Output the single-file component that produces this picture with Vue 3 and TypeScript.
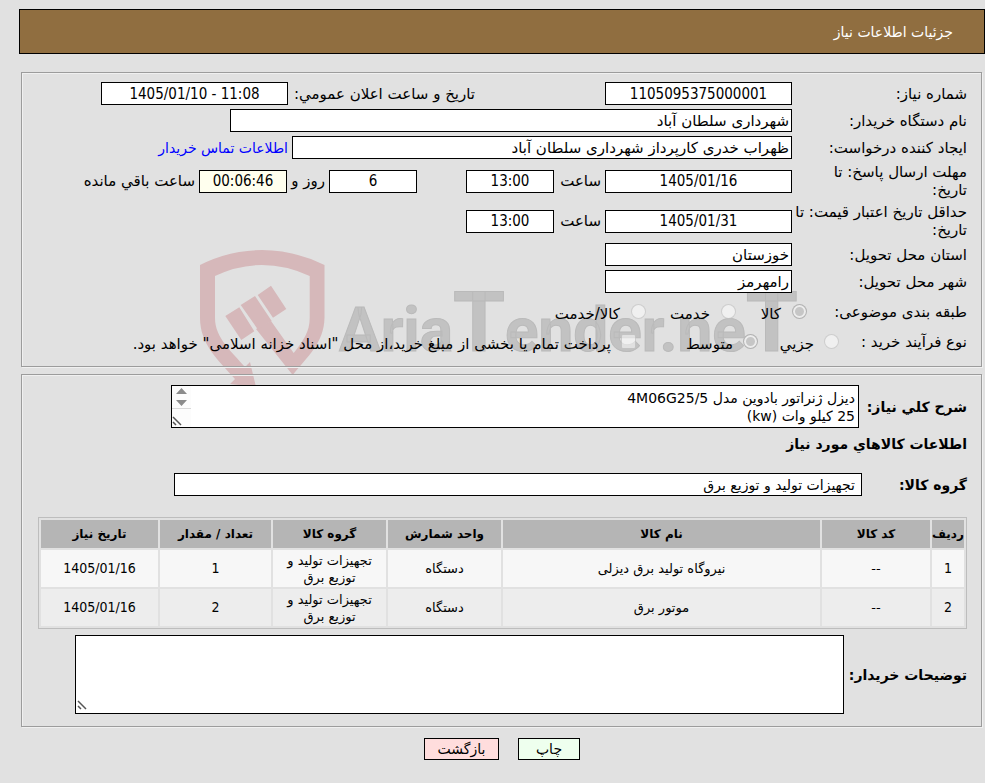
<script setup lang="ts">
import { ref } from 'vue'

interface Item {
  code: string
  name: string
  unit: string
  group: string
  qty: number
  date: string
}

const items: Item[] = [
  { code: '--', name: 'نیروگاه تولید برق دیزلی', unit: 'دستگاه', group: 'تجهیزات تولید و توزیع برق', qty: 1, date: '1405/01/16' },
  { code: '--', name: 'موتور برق', unit: 'دستگاه', group: 'تجهیزات تولید و توزیع برق', qty: 2, date: '1405/01/16' },
]

const description = ref('دیزل ژنراتور بادوین مدل 4M06G25/5\n25 کیلو وات (kw)')
const buyerNotes = ref('')
</script>

<template>
  <div class="page" dir="rtl">
    <header class="title-bar">جزئیات اطلاعات نیاز</header>

    <main class="content">
      <svg class="watermark" viewBox="190 245 615 147" aria-hidden="true" direction="ltr">
        <g fill="#d6b8ba">
          <path
            d="M200 265Q230 250 262 250T324.500 265V318C324 343 307 357 292.700 375L256 329L271 321L293.700 353C303 341 309.700 332 309.700 318V276Q286 265 262 265T215 276V318C215 338 232 352 245 367L250 362L256 387L230 384L235 379C218 360 200 344 200 318Z"
          />
          <path d="M225.300 316L239.300 307.300L254.300 331.300L241.300 340ZM240.700 305L255 296L271.700 321L257.700 329.300ZM257.700 295L271 285.700L286.300 309L273 317.700Z" />
        </g>
        <text class="brand" x="339" y="351">Aria<tspan class="cap">T</tspan>ender.ne<tspan class="cap">T</tspan></text>
      </svg>

      <section class="panel general">
        <div class="row">
          <label class="caption" for="need-no">شماره نیاز:</label>
          <input id="need-no" class="box date" value="1105095375000001" readonly />
          <label class="announce" for="announce">تاریخ و ساعت اعلان عمومي:</label>
          <input id="announce" class="box date" value="1405/01/10 - 11:08" readonly />
        </div>
        <div class="row">
          <label class="caption" for="org">نام دستگاه خریدار:</label>
          <input id="org" class="box org" value="شهرداری سلطان آباد" readonly />
        </div>
        <div class="row">
          <label class="caption" for="creator">ایجاد کننده درخواست:</label>
          <input id="creator" class="box creator" value="ظهراب خدری کارپرداز شهرداری سلطان آباد" readonly />
          <a href="#">اطلاعات تماس خریدار</a>
        </div>
        <div class="row tall">
          <label class="caption" for="deadline">مهلت ارسال پاسخ: تا<br />تاریخ:</label>
          <input id="deadline" class="box date" value="1405/01/16" readonly />
          <label class="hour" for="deadline-h">ساعت</label>
          <input id="deadline-h" class="box time" value="13:00" readonly />
          <input id="days" class="box time days" value="6" readonly />
          <label class="and" for="days">روز و</label>
          <input id="left" class="box time countdown" value="00:06:46" readonly />
          <label for="left">ساعت باقي مانده</label>
        </div>
        <div class="row tall">
          <label class="caption" for="valid">حداقل تاریخ اعتبار قیمت: تا<br />تاریخ:</label>
          <input id="valid" class="box date" value="1405/01/31" readonly />
          <label class="hour" for="valid-h">ساعت</label>
          <input id="valid-h" class="box time" value="13:00" readonly />
        </div>
        <div class="row">
          <label class="caption" for="province">استان محل تحویل:</label>
          <input id="province" class="box place" value="خوزستان" readonly />
        </div>
        <div class="row">
          <label class="caption" for="city">شهر محل تحویل:</label>
          <input id="city" class="box place" value="رامهرمز" readonly />
        </div>
        <div class="row options subject">
          <span class="caption">طبقه بندی موضوعی:</span>
          <label class="first"><input type="radio" name="subject" checked disabled /><span>کالا</span></label>
          <label><input type="radio" name="subject" disabled /><span>خدمت</span></label>
          <label><input type="radio" name="subject" disabled /><span>کالا/خدمت</span></label>
        </div>
        <div class="row options process">
          <span class="caption">نوع فرآیند خرید :</span>
          <label><input type="radio" name="process" disabled /><span>جزیي</span></label>
          <label><input type="radio" name="process" checked disabled /><span>متوسط</span></label>
          <label><input type="checkbox" disabled /><span>پرداخت تمام یا بخشی از مبلغ خرید،از محل "اسناد خزانه اسلامی" خواهد بود.</span></label>
        </div>
      </section>

      <section class="panel goods">
        <div class="row">
          <label class="strong" for="desc">شرح کلي نیاز:</label>
          <div class="area desc">
            <textarea id="desc" v-model="description" readonly></textarea>
            <svg class="scroll" width="19" height="41" viewBox="0 0 19 41" aria-hidden="true">
              <path d="M0 0H19V41H0Z" fill="#fcfcfc" />
              <path d="M4 8L9.500 2L15 8ZM4 14H15L9.500 20Z" fill="#8b8b8b" />
              <path d="M0 22.500H19" stroke="#d9d9d9" />
              <path d="M1 31L9 39M1 36L4 39" stroke="#555" stroke-width="1.500" />
            </svg>
          </div>
        </div>
        <h2>اطلاعات کالاهاي مورد نیاز</h2>
        <div class="row group">
          <label class="strong" for="group">گروه کالا:</label>
          <input id="group" class="box wide" value="تجهیزات تولید و توزیع برق" readonly />
        </div>

        <table>
          <colgroup>
            <col class="c-row" /><col class="c-code" /><col /><col class="c-unit" /><col class="c-unit" /><col class="c-qty" /><col class="c-date" />
          </colgroup>
          <thead>
            <tr>
              <th>ردیف</th><th>کد کالا</th><th>نام کالا</th><th>واحد شمارش</th><th>گروه کالا</th><th>تعداد / مقدار</th><th>تاریخ نیاز</th>
            </tr>
          </thead>
          <tbody>
            <tr v-for="(item, i) in items" :key="i">
              <td class="num">{{ i + 1 }}</td>
              <td>{{ item.code }}</td>
              <td>{{ item.name }}</td>
              <td>{{ item.unit }}</td>
              <td>{{ item.group }}</td>
              <td class="num">{{ item.qty }}</td>
              <td class="num">{{ item.date }}</td>
            </tr>
          </tbody>
        </table>

        <div class="row notes-row">
          <label class="strong" for="notes">توضیحات خریدار:</label>
          <div class="area notes">
            <textarea id="notes" v-model="buyerNotes" readonly></textarea>
            <svg class="grip" width="12" height="12" viewBox="0 0 12 12" aria-hidden="true">
              <path d="M1 1L9 9M1 6L4 9" stroke="#555" stroke-width="1.500" />
            </svg>
          </div>
        </div>
      </section>
    </main>

    <footer class="actions">
      <button type="button" class="print">چاپ</button>
      <button type="button" class="back">بازگشت</button>
    </footer>
  </div>
</template>

<style>
body {
  background: #e1e1e1;
}
</style>

<style scoped>
.page {
  padding: 9px 0 22px 19px;
  font: 14px/18px 'DejaVu Sans', sans-serif;
  color: #000;
}
.title-bar {
  padding: 13px 31px 12px;
  border: 1px solid #000;
  background: #906e40;
  color: #fff;
}
.content {
  position: relative;
  z-index: 0;
  margin: 18px 3px 0 2px;
}
.watermark {
  position: absolute;
  z-index: -1;
  top: 173px;
  right: 177px;
  width: 615px;
  height: 147px;
}
.brand {
  fill: #c2c2c2;
  stroke: #bababa;
  font: bold 62px Roboto, 'Liberation Sans', sans-serif;
}
.cap {
  font-size: 84px;
}
.panel {
  margin-bottom: 7px;
  padding: 9px 14px 9px 16px;
  border: 1px solid #9c9c9c;
  box-shadow: inset 1px 1px #f0f0f0, 1px 1px #f0f0f0;
}
.general {
  font-size: 15px;
}
.row {
  display: flex;
  align-items: center;
  min-height: 23px;
  margin-bottom: 4px;
  white-space: nowrap;
}
.row.tall {
  min-height: 36px;
}
.caption {
  flex: none;
  width: 175px;
}
.box {
  box-sizing: border-box;
  height: 23px;
  margin: 0;
  padding: 0 2px;
  border: 1px solid #000;
  border-radius: 0;
  background: #fff;
  color: #000;
  font: inherit;
}
.date,
.time {
  direction: ltr;
  text-align: center;
  font: 15px/18px 'DejaVu Sans Condensed', 'DejaVu Sans', sans-serif;
}
.date {
  width: 187px;
}
.time {
  width: 88px;
}
.place {
  width: 187px;
}
.org {
  width: 562px;
}
.creator {
  width: 500px;
}
.box + label {
  margin-right: 4px;
}
.box + .announce {
  width: 187px;
  margin-right: 130px;
}
.hour {
  width: 47px;
}
.days {
  margin-right: 49px;
}
.and {
  width: 38px;
}
.countdown {
  background: #ffffee;
}
a {
  margin-right: 4px;
  color: #0000ff;
  font-size: 14px;
  text-decoration: none;
}
.options label {
  display: flex;
  align-items: center;
}
.options label span {
  padding-top: 4px;
}
.options {
  margin-top: 7px;
}
.subject {
  margin-bottom: 0;
}
.subject .caption {
  width: 160px;
}
.subject label {
  width: 90px;
  gap: 11px;
}
.subject .first {
  width: 71px;
}
.process .caption {
  width: 128px;
}
.process label {
  width: 81px;
  gap: 10px;
}
.process label:last-child {
  margin-right: 41px;
}
input[type='radio'],
input[type='checkbox'] {
  appearance: none;
  flex: none;
  box-sizing: border-box;
  width: 15px;
  height: 15px;
  margin: 0;
  border: 1px solid rgba(140, 140, 140, 0.35);
  background: rgba(255, 255, 255, 0.5);
}
input[type='radio'] {
  border-radius: 50%;
}
input[type='checkbox'] {
  border-radius: 2px;
}
input[type='radio']:checked {
  background: #c6c6c6;
  box-shadow: inset 0 0 0 2px #ececec;
}
.strong,
h2 {
  font-size: 14px;
  font-weight: bold;
}
.goods {
  padding-top: 10px;
  padding-bottom: 10px;
}
h2 {
  margin: 7px 0 20px;
  line-height: 18px;
}
.area {
  position: relative;
  box-sizing: border-box;
  border: 1px solid #000;
  background: #fff;
}
.area textarea {
  display: block;
  box-sizing: border-box;
  width: 100%;
  height: 100%;
  margin: 0;
  padding: 3px;
  border: 0;
  outline: 0;
  resize: none;
  overflow: hidden;
  background: transparent;
  color: #000;
  font: inherit;
}
.goods .strong {
  flex: none;
  width: 108px;
}
.desc {
  flex: 0 1 688px;
  height: 43px;
}
.goods .group .strong {
  width: 105px;
}
.wide {
  flex: 0 1 688px;
  padding-right: 6px;
}
.goods .notes-row .strong {
  width: 123px;
}
.notes {
  flex: 0 1 769px;
  height: 79px;
}
.scroll {
  position: absolute;
  left: 0;
  top: 0;
}
.grip {
  position: absolute;
  left: 1px;
  bottom: 1px;
}
table {
  width: 100%;
  margin: 21px 0 6px;
  border: 1px solid #bdbdbd;
  border-spacing: 2px;
  table-layout: fixed;
  text-align: center;
  font-size: 13px;
  line-height: 17px;
}
th,
td {
  padding: 1px;
}
th {
  height: 26px;
  padding: 1px 0;
  background: #b5b5b5;
  font-size: 12px;
  white-space: nowrap;
}
td {
  height: 35px;
  background: #f7f7f7;
}
tr:nth-child(even) td {
  background: #ededed;
}
td:nth-child(5) {
  padding: 1px 10px;
}
.num {
  font: 14px/17px 'DejaVu Sans Condensed', 'DejaVu Sans', sans-serif;
}
.c-row {
  width: 32px;
}
.c-code {
  width: 108px;
}
.c-unit {
  width: 113px;
}
.c-qty {
  width: 111px;
}
.c-date {
  width: 117px;
}
.notes-row {
  margin-bottom: 2px;
}
.actions {
  display: flex;
  justify-content: center;
  gap: 19px;
  margin-top: 11px;
}
button {
  height: 22px;
  padding: 0 10px;
  border: 1px solid #000;
  font: inherit;
  line-height: 18px;
  color: #000;
}
.print {
  min-width: 62px;
  background: #eeffee;
}
.back {
  min-width: 75px;
  background: #ffdddd;
}
</style>
